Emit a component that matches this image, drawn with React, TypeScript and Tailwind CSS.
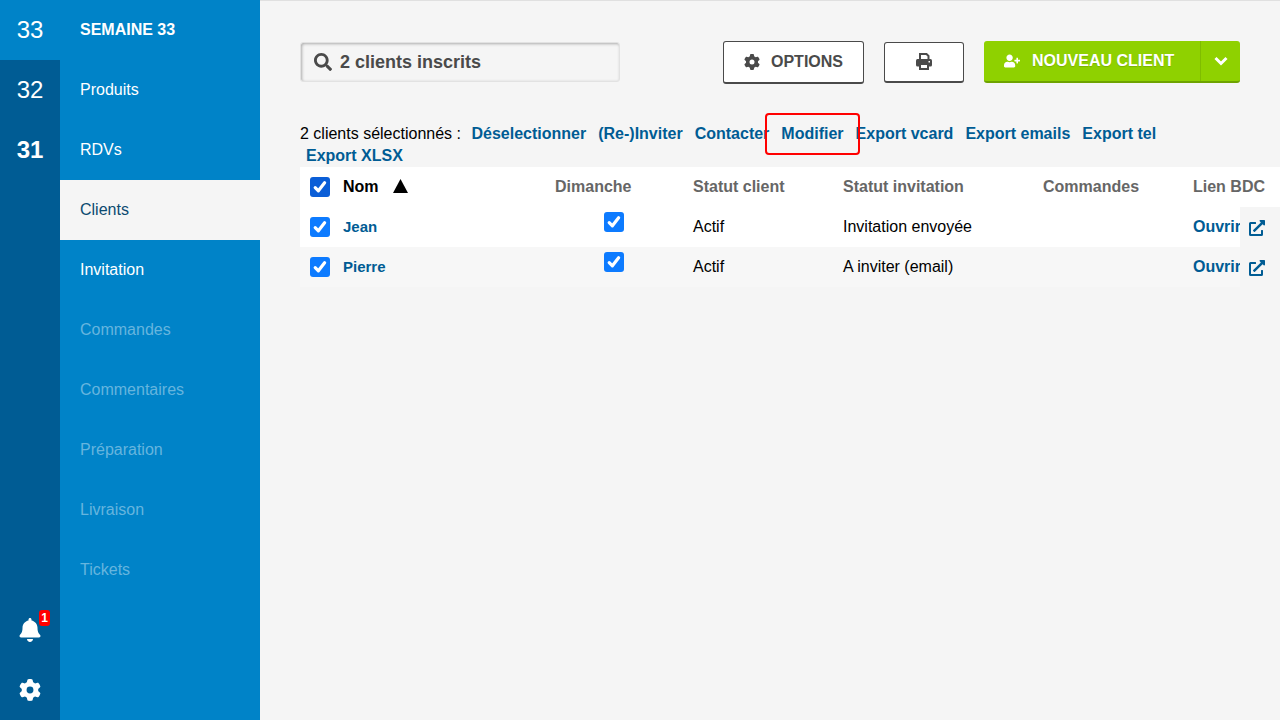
import { FaSearch, FaUserPlus, FaExternalLinkAlt, FaBell } from "react-icons/fa";
import { FaGear } from "react-icons/fa6";

const menu = [
  { label: "Produits", cls: "text-white" },
  { label: "RDVs", cls: "text-white" },
  { label: "Clients", cls: "bg-[#f5f5f5] text-[#0b4a70]" },
  { label: "Invitation", cls: "text-white" },
  { label: "Commandes", cls: "text-[#66b5de]" },
  { label: "Commentaires", cls: "text-[#66b5de]" },
  { label: "Préparation", cls: "text-[#66b5de]" },
  { label: "Livraison", cls: "text-[#66b5de]" },
  { label: "Tickets", cls: "text-[#66b5de]" },
];

const links = ["Déselectionner", "(Re-)Inviter", "Contacter", "Modifier", "Export vcard", "Export emails", "Export tel", "Export XLSX"];

function Check({ dark }: { dark?: boolean }) {
  return (
    <span className={`flex h-5 w-5 items-center justify-center rounded-[3px] ${dark ? "bg-[#0b5ed7]" : "bg-[#0d7bff]"}`}>
      <svg viewBox="0 0 20 20" className="h-5 w-5" fill="none" stroke="white" strokeWidth="3.2" strokeLinecap="round" strokeLinejoin="round">
        <path d="M5.2 10.6 L8.4 13.8 L14.6 5.8" />
      </svg>
    </span>
  );
}

function PrintIcon() {
  return (
    <svg viewBox="0 0 16 17" className="h-[17px] w-4" fill="none">
      <path d="M4 6.5 V1 H10.5 L12.5 3 V6.5" stroke="currentColor" strokeWidth="2" />
      <rect x="0" y="6" width="16" height="7.5" rx="1.5" fill="currentColor" />
      <rect x="4" y="11" width="8" height="5" fill="white" stroke="currentColor" strokeWidth="2" />
      <rect x="12.5" y="8" width="1.5" height="1.5" fill="white" />
    </svg>
  );
}

function Row({ name, status, bg }: { name: string; status: string; bg: string }) {
  return (
    <div className={`flex h-10 items-center ${bg}`}>
      <div className="flex w-[243px] items-center pl-2.5">
        <Check />
        <span className="ml-[13px] text-[15px] font-bold text-[#005c94]">{name}</span>
      </div>
      <div className="flex h-full w-[140px] justify-center pt-[5px] pl-[2px]">
        <div><Check /></div>
      </div>
      <div className="w-[150px] pl-2.5">Actif</div>
      <div className="w-[200px] pl-2.5">{status}</div>
      <div className="w-[150px]" />
      <div className="flex h-full w-[97px] items-center">
        <div className="w-[57px] pl-2.5 font-bold text-[#005c94]">Ouvrir</div>
        <div className="flex h-full w-10 items-center bg-[#f5f5f5] pt-[2px] pl-[9px]">
          <FaExternalLinkAlt className="h-4 w-4 text-[#005c94]" />
        </div>
      </div>
    </div>
  );
}

export default function App() {
  return (
    <div className="flex h-[720px] w-[1280px] overflow-hidden bg-[#f5f5f5] font-['Liberation_Sans',Arial,sans-serif] text-base text-black">
      <aside className="flex w-[60px] shrink-0 flex-col bg-[#005c94] text-white">
        <div className="flex h-[60px] items-center justify-center bg-[#0083c8] text-2xl">33</div>
        <div className="flex h-[60px] items-center justify-center text-2xl">32</div>
        <div className="flex h-[60px] items-center justify-center text-2xl font-bold">31</div>
        <div className="flex-1" />
        <div className="relative flex h-[60px] items-center justify-center">
          <FaBell className="h-6 w-6" />
          <span className="absolute top-[10px] left-[39px] flex h-4 w-[11px] items-center justify-center rounded-[3px] bg-[#f00] text-xs font-bold leading-none">1</span>
        </div>
        <div className="flex h-[60px] items-center justify-center">
          <FaGear className="h-[22px] w-[22px]" />
        </div>
      </aside>
      <nav className="flex w-[200px] shrink-0 flex-col bg-[#0083c8]">
        <div className="flex h-[60px] items-center pl-5 font-bold text-white">SEMAINE 33</div>
        {menu.map((m) => (
          <div key={m.label} className={`flex h-[60px] items-center pl-5 ${m.cls}`}>{m.label}</div>
        ))}
      </nav>
      <main className="relative flex min-w-0 flex-1 flex-col border-t border-[#e0e0e0] pt-[39px]">
        <div className="flex h-[44px] items-center pl-10">
          <div className="flex h-10 w-[320px] items-center rounded-[3px] border border-[#e2e2e2] bg-[#f5f5f5] pl-[13px] text-lg font-bold text-[#4a4a4a] shadow-[inset_1px_1px_3px_rgba(0,0,0,0.3)]">
            <FaSearch className="h-[18px] w-[18px]" />
            <span className="ml-2">2 clients inscrits</span>
          </div>
          <button className="ml-[103px] flex h-[43px] w-[141px] items-center justify-center rounded-[3px] border border-b-2 border-[#4a4a4a] bg-white font-bold text-[#4a4a4a]">
            <FaGear className="h-4 w-4" />
            <span className="ml-[11px]">OPTIONS</span>
          </button>
          <button className="ml-5 flex h-[41px] w-20 items-center justify-center rounded-[3px] border border-b-2 border-[#4a4a4a] bg-white text-[#4a4a4a]">
            <PrintIcon />
          </button>
          <div className="ml-5 flex h-[42px] w-64 rounded-[3px] border-b-2 border-[#6ea300] bg-[#8fd100] font-bold text-white">
            <div className="flex flex-1 items-center pl-5">
              <FaUserPlus className="h-4 w-4" />
              <span className="ml-3 [text-shadow:0_1px_1px_rgba(0,0,0,0.15)]">NOUVEAU CLIENT</span>
            </div>
            <div className="flex w-10 items-center justify-center border-l border-[#7fbc00]">
              <svg viewBox="0 0 14 10" className="h-[10px] w-[14px]" fill="none" stroke="white" strokeWidth="3">
                <path d="M1.5 2 L7 7.5 L12.5 2" />
              </svg>
            </div>
          </div>
        </div>
        <div className="relative mt-[39px] ml-10 w-[870px] text-base leading-[22px]">
          <span className="mr-[4.5px]">2 clients sélectionnés :</span>
          {links.map((l) => (
            <span key={l} className="mx-1.5 inline-block font-bold text-[#005c94]">{l}</span>
          ))}
          <div className="absolute top-[-10px] left-[465px] h-[42px] w-[95px] rounded-[4px] border-2 border-[#f00]" />
        </div>
        <div className="ml-10 overflow-hidden">
          <div className="flex h-10 items-center bg-white font-bold text-[#666666]">
            <div className="flex w-[243px] items-center pl-2.5 text-black">
              <Check dark />
              <span className="ml-[13px]">Nom</span>
              <svg viewBox="0 0 14 13" className="mb-[2px] ml-[14px] h-[14px] w-[15px]" preserveAspectRatio="none"><path d="M7 0 L14 13 L0 13 Z" fill="black" /></svg>
            </div>
            <div className="w-[140px] pl-3">Dimanche</div>
            <div className="w-[150px] pl-2.5">Statut client</div>
            <div className="w-[200px] pl-2.5">Statut invitation</div>
            <div className="w-[150px] pl-2.5">Commandes</div>
            <div className="w-[97px] pl-2.5">Lien BDC</div>
          </div>
          <Row name="Jean" status="Invitation envoyée" bg="bg-white" />
          <Row name="Pierre" status="A inviter (email)" bg="bg-[#f7f7f7]" />
        </div>
      </main>
    </div>
  );
}
